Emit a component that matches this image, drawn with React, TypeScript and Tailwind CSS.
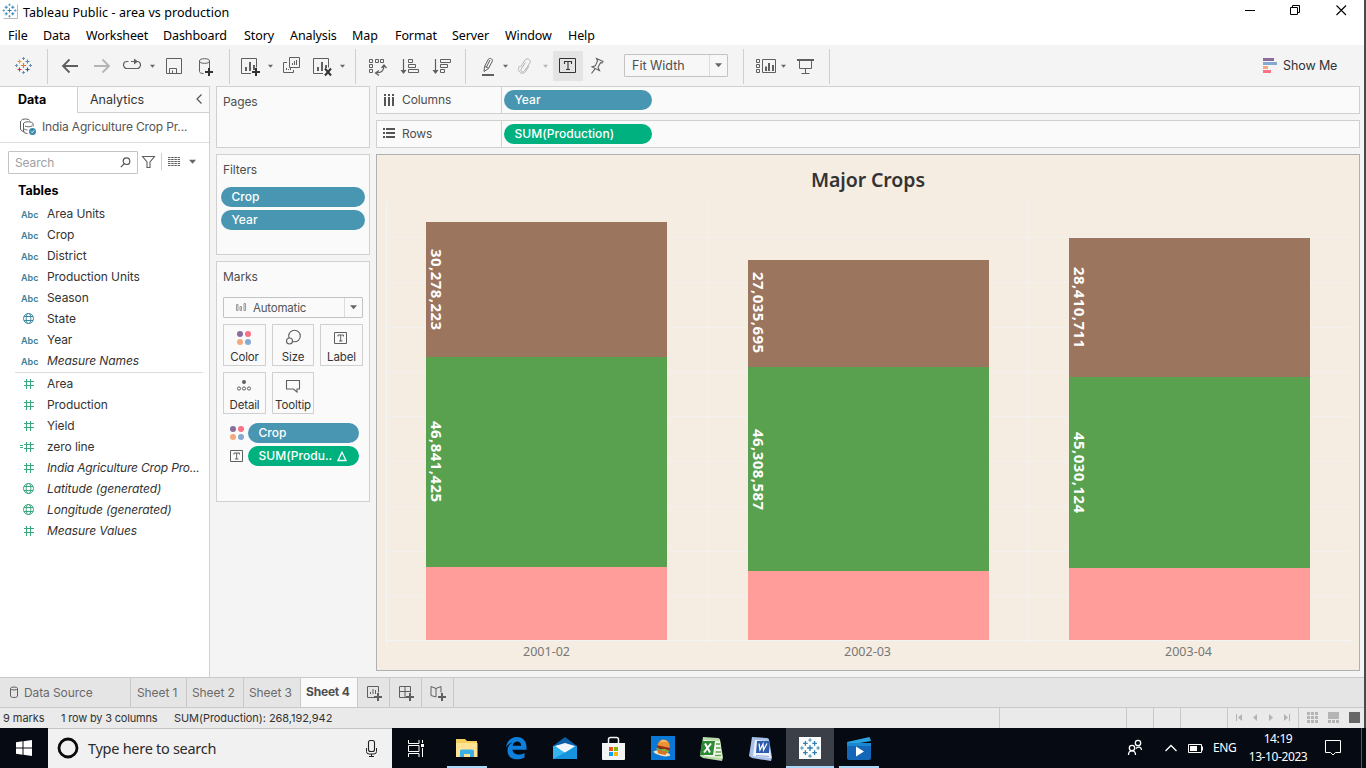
import React from "react";

type Box = { x: number; y: number; w: number; h: number; className?: string; children?: React.ReactNode };

/* An icon cell whose drawing uses window coordinates. */
function Cell({ x, y, w, h, className = "", children }: Box) {
  return (
    <svg className={`block shrink-0 ${className}`} width={w} height={h} viewBox={`${x} ${y} ${w} ${h}`} fill="none" stroke="#5f5f5f" strokeWidth="1">
      {children}
    </svg>
  );
}

function Plus({ x, y, r, c, s = 1 }: { x: number; y: number; r: number; c: string; s?: number }) {
  return <path d={`M${x - r} ${y}H${x + r}M${x} ${y - r}V${y + r}`} stroke={c} strokeWidth={s} />;
}

function LogoMark({ x, y, k = 1, colors }: { x: number; y: number; k?: number; colors: string[] }) {
  const [mid, tl, tr, bl, br, edge] = colors;
  return (
    <g transform={`translate(${x} ${y}) scale(${k})`}>
      <Plus x={0} y={0} r={2.5} c={mid} s={1.2} />
      <Plus x={-4} y={-4} r={2} c={tl} s={1.1} />
      <Plus x={4} y={-4} r={2} c={tr} s={1.1} />
      <Plus x={-4} y={4} r={2} c={bl} s={1.1} />
      <Plus x={4} y={4} r={2} c={br} s={1.1} />
      <Plus x={0} y={-7} r={1.5} c={edge} />
      <Plus x={0} y={7} r={1.5} c={edge} />
      <Plus x={-7} y={0} r={1.5} c={edge} />
      <Plus x={7} y={0} r={1.5} c={edge} />
    </g>
  );
}

const BLUE_LOGO = ["#2f7fb0", "#2f7fb0", "#2f7fb0", "#2f7fb0", "#2f7fb0", "#4b93bd"];
const COLOR_LOGO = ["#e8762d", "#e89a3c", "#5b8ba8", "#c4324a", "#3d4f86", "#6f8fae"];

function Caret({ x, y = 66, c = "#666", s = 2.5 }: { x: number; y?: number; c?: string; s?: number }) {
  return <path d={`M${x - s} ${y - s / 2}h${2 * s}l${-s} ${s + 0.4}z`} fill={c} stroke="none" />;
}

function TitleBar() {
  return (
    <div className="flex h-[25px] items-center">
      <Cell x={0} y={0} w={23} h={25}>
        <path d="M3.500 18.500h14v-14" stroke="#b8b8b8" />
        <LogoMark x={9.5} y={10.5} k={0.82} colors={BLUE_LOGO} />
      </Cell>
      <span className="pt-[2px] text-[12.5px] tracking-[0.06px] text-black">Tableau Public - area vs production</span>
      <Cell x={1230} y={0} w={134} h={25} className="ml-auto">
        <path d="M1245 10.5h10" stroke="#000" />
        <path d="M1290.5 7.5h7v7h-7zM1292.5 7v-1.500h7v7h-2" stroke="#000" />
        <path d="M1336.500 5.500l9.500 9.500M1346 5.500l-9.500 9.500" stroke="#000" strokeWidth="1.1" />
      </Cell>
    </div>
  );
}

const MENUS: [string, string][] = [
  ["File", "w-[35px]"], ["Data", "w-[43px]"], ["Worksheet", "w-[77px]"], ["Dashboard", "w-[81px]"],
  ["Story", "w-[46px]"], ["Analysis", "w-[62px]"], ["Map", "w-[43px]"], ["Format", "w-[57px]"],
  ["Server", "w-[53px]"], ["Window", "w-[63px]"], ["Help", "w-[40px]"],
];

function MenuBar() {
  return (
    <div className="flex h-[20px] items-center pl-2 pt-[2px] text-[12.5px] tracking-[-0.1px] text-black">
      {MENUS.map(([m, w]) => (
        <span key={m} className={`${w} whitespace-nowrap`}>{m}</span>
      ))}
    </div>
  );
}

function Toolbar() {
  return (
    <div className="flex h-[41px] items-center bg-[#f4f4f4]">
      <Cell x={0} y={45} w={553} h={41}>
        <LogoMark x={23.500} y={65.500} colors={COLOR_LOGO} />
        <path d="M47.500 49v35M229.500 49v35M355.500 49v35M465.500 49v35" stroke="#cfcfcf" />
        <path d="M62.500 66h15.500M69.500 59.500l-6.500 6.500 6.500 6.500" strokeWidth="1.8" />
        <path d="M94 66h15.500M102.500 59.500l6.500 6.500-6.500 6.500" stroke="#b4b4b4" strokeWidth="1.8" />
        <path d="M128.500 61.500h-1.500a3.500 3.500 0 0 0 0 7h10a3.500 3.500 0 0 0 0-7h-6" strokeWidth="1.2" />
        <path d="M134 58.500v6l4-3z" fill="#5f5f5f" stroke="none" />
        <Caret x={152.500} />
        <path d="M166.500 58.500h15v15h-15zM169.500 73v-4.500h7v4.500M172.500 70.500v2.500" />
        <path d="M199.500 61v10.500c0 1.200 1.500 2 4 2M209.500 61v7" />
        <ellipse cx="204.500" cy="61" rx="5" ry="2.300" />
        <Plus x={209} y={72} r={4} c="#333" s={2} />
        <path d="M251 73.500h-9.500v-15h15v9" />
        <path d="M246 67v4M250 62v9M254 65v5" strokeWidth="2" />
        <Plus x={256} y={72} r={4} c="#333" s={2} />
        <Caret x={270.500} />
        <path d="M289.500 57.500h10v10h-10zM287 62.500h-3.500v10h10V70" />
        <path d="M292.500 65v-2M294.500 65v-4M296.500 65v-5M286.500 70v-2M288.500 70v-1M290.500 70v-2" />
        <path d="M323 73.500h-9.500v-15h15v9" />
        <path d="M318 67v4M322 62v9M326 65v3" strokeWidth="2" />
        <path d="M325 68.500l6 7M331 68.500l-6 7" stroke="#333" strokeWidth="2" />
        <Caret x={342.500} />
        <path d="M369.500 59.500h3v3h-3zM375.500 59.500h3v3h-3zM380.500 59.500h3v3h-3zM369.500 64.500h3v3h-3zM369.500 69.500h3v3h-3z" />
        <path d="M384 65.500c0 5-3 7.500-8 7.500M381.500 68l2.500-3 2.500 3M379 70.500l-3.500 2.500 3.500 2.500" strokeWidth="1.200" />
        <path d="M403.500 59v13" strokeWidth="1.200" />
        <path d="M400.500 70h6l-3 4z" fill="#5f5f5f" stroke="none" />
        <path d="M408.500 59.500h4v3h-4zM408.500 64.500h7v3h-7zM408.500 69.500h10v3h-10z" />
        <path d="M435.500 59v13" strokeWidth="1.200" />
        <path d="M432.500 70h6l-3 4z" fill="#5f5f5f" stroke="none" />
        <path d="M440.500 59.500h10v3h-10zM440.500 64.500h7v3h-7zM440.500 69.500h4v3h-4z" />
        <path d="M484.500 66.500l4-7.500c1-1.500 4.500 0 4 1.800l-4 7.700-4.500 3zM485 66.500l4 2M490 60l-3.500 7" />
        <path d="M482 75h12" strokeWidth="2" />
        <Caret x={505.500} />
        <path d="M520.500 67l4.500-7c1.800-2.500 6.500-.5 5 2.800l-5.500 8.200c-1.500 2-4.500.5-3.500-1.700l4.500-6.800M519.500 66c-2 3.500-.5 6 1.500 7 2 .8 3.500 0 4.500-1.500l3.500-5.500" stroke="#b4b4b4" />
        <Caret x={545.500} c="#b4b4b4" />
      </Cell>
      <div className="flex h-[30px] w-[30px] items-center justify-center bg-[#e4e4e4]">
        <Cell x={553} y={51} w={30} h={30}>
          <path d="M559.500 58.500h16v14h-16z" stroke="#333" />
          <path d="M564.500 64v-2.500h7v2.500M568 61.500v8M566 69.500h4" stroke="#333" strokeWidth="1.1" />
        </Cell>
      </div>
      <Cell x={583} y={45} w={41} h={41}>
        <path d="M596.500 58.500l6.500 3-1 1.500-1.500-.300-2.500 4.500 1.500 3.500-7.500-3.800 3.300-1 2.200-5zM595 68.800l-3.500 4.700" strokeWidth="1.1" />
      </Cell>
      <div className="flex h-[23px] w-[104px] items-stretch rounded-[1px] border border-[#c3c3c3] bg-[#f7f7f7]">
        <span className="flex-1 pl-[7px] font-['Inter',sans-serif] text-[12.5px] leading-[21px] text-[#4e4e4e]">Fit Width</span>
        <div className="flex w-[18px] items-center justify-center border-l border-[#dcdcdc]">
          <Cell x={0} y={0} w={9} h={9}><Caret x={4.500} y={4} s={3.500} /></Cell>
        </div>
      </div>
      <Cell x={728} y={45} w={112} h={41}>
        <path d="M743.500 49v35M829.500 49v35" stroke="#cfcfcf" />
        <path d="M756.500 59.500h3v3h-3zM756.500 64.500h3v3h-3zM756.500 69.500h3v3h-3zM762.500 59.500h13v13h-13z" />
        <path d="M766 66.500v4.500M769 63v8M773 65v6" strokeWidth="2" />
        <Caret x={783.500} />
        <path d="M797 60h17" strokeWidth="2" />
        <path d="M799.500 60v8.500h12V60M805.500 68.500v4.500M801.500 73.500h8" />
      </Cell>
      <div className="ml-auto flex items-center pr-[27px]">
        <Cell x={1263} y={45} w={20} h={41}>
          <path d="M1263 59.500h11" stroke="#8a6d9b" strokeWidth="3" />
          <path d="M1263 63.500h14" stroke="#86a9d1" strokeWidth="3" />
          <path d="M1263 67.500h5" stroke="#f4a582" strokeWidth="3" />
          <path d="M1263 71.500h8" stroke="#fb7185" strokeWidth="3" />
        </Cell>
        <span className="w-[54px] whitespace-nowrap pt-[1px] font-['Inter',sans-serif] text-[12.5px] tracking-[-0.1px] text-[#333]">Show Me</span>
      </div>
    </div>
  );
}

type FieldKind = "abc" | "geo" | "num" | "calc" | "geonum";

function FieldIcon({ kind }: { kind: FieldKind }) {
  if (kind === "abc") return <span className="w-[26px] pt-[2px] text-[9px] font-semibold text-[#3f8099]">Abc</span>;
  const c = kind === "geo" ? "#3d8aa6" : "#3ba77f";
  if (kind === "geo" || kind === "geonum")
    return (
      <svg className="w-[26px]" width="26" height="13" viewBox="0 0 26 13" fill="none" stroke={c}>
        <circle cx="7.500" cy="6.500" r="5" />
        <ellipse cx="7.500" cy="6.500" rx="2.300" ry="5" />
        <path d="M3 4.500h9M3 8.500h9" />
      </svg>
    );
  return (
    <svg className="overflow-visible" width="26" height="13" viewBox="0 0 26 13" fill="none" stroke={c} strokeWidth="1.1">
      <path d="M5.500 2v10M9.500 2v10M3 4.500h10M3 8.500h10" />
      {kind === "calc" && <path d="M-1 5.500h3M-1 7.500h3" />}
    </svg>
  );
}

const DIMS: [FieldKind, string, boolean?][] = [
  ["abc", "Area Units"], ["abc", "Crop"], ["abc", "District"], ["abc", "Production Units"],
  ["abc", "Season"], ["geo", "State"], ["abc", "Year"], ["abc", "Measure Names", true],
];
const MEASURES: [FieldKind, string, boolean?][] = [
  ["num", "Area"], ["num", "Production"], ["num", "Yield"], ["calc", "zero line"],
  ["num", "India Agriculture Crop Pro...", true], ["geonum", "Latitude (generated)", true],
  ["geonum", "Longitude (generated)", true], ["num", "Measure Values", true],
];

function FieldRow({ kind, name, italic }: { kind: FieldKind; name: string; italic?: boolean }) {
  const spacing = !italic ? "tracking-[-0.08px]" : name.length > 24 ? "italic tracking-[-0.18px]" : "italic tracking-[-0.1px]";
  return (
    <div className="flex h-[21px] items-center pl-[21px]">
      <FieldIcon kind={kind} />
      <span className={`whitespace-nowrap pt-px ${spacing}`}>{name}</span>
    </div>
  );
}

function DataPane() {
  return (
    <div className="flex w-[210px] shrink-0 flex-col border-r border-[#d0d0d0] bg-white text-[12px] text-[#333]">
      <div className="flex h-[27px]">
        <div className="w-[77px] border-t border-[#d0d0d0] pl-[18px] text-[12.5px] font-bold leading-[25px] text-black">Data</div>
        <div className="flex flex-1 items-center border border-r-0 border-[#d0d0d0] bg-[#fafafa] pl-3 text-[12.5px]">
          <span className="pt-px">Analytics</span>
          <svg className="ml-auto mr-[6px]" width="8" height="12" viewBox="0 0 8 12" fill="none" stroke="#555" strokeWidth="1.2"><path d="M6.500 .5L2 5l4.500 4.500" /></svg>
        </div>
      </div>
      <div className="flex h-[30px] items-center border-b border-[#dedede] text-[#555]">
        <Cell x={0} y={113} w={42} h={29}>
          <path d="M21.500 120.500c0-2 8-2 8 0M20.500 121v8c0 1.500 2 2.500 4 2.500M23.500 123v8.500c0 1 2 2 4 2M23.500 123.500c1-2.500 9-2 9.500 0v3M25 126c2 1 5 1 7 0M23.500 128.500c1 1 3 1.500 4 1.500" />
          <circle cx="32.500" cy="131.500" r="3.500" fill="#3a87ad" stroke="none" />
          <path d="M31 131.500l1.200 1.200 2-2.300" stroke="#fff" />
        </Cell>
        <span className="whitespace-nowrap pb-[2px] tracking-[-0.15px]">India Agriculture Crop Pr...</span>
      </div>
      <div className="mt-[8px] flex h-[23px] items-center pl-2">
        <div className="flex h-[23px] w-[130px] items-center rounded-[1px] border border-[#c3c3c3] pl-[6px] pr-[6px] text-[#a0a0a0]">
          <span className="tracking-[-0.1px]">Search</span>
          <svg className="ml-auto" width="11" height="11" viewBox="0 0 11 11" fill="none" stroke="#555" strokeWidth="1.2"><circle cx="6.500" cy="4.200" r="3.300" /><path d="M4 7L.8 10.200" /></svg>
        </div>
        <Cell x={138} y={151} w={64} h={23}>
          <path d="M142.500 156.500h12l-4.500 5.500v5.500h-3v-5.500z" strokeWidth="1.1" />
          <path d="M161.500 153v17.500" stroke="#cfcfcf" />
          <path d="M168 157.500h12M168 159.500h12M168 161.500h12M168 163.500h12M168 165.500h12" strokeDasharray="2.500 .7" />
          <Caret x={192.500} y={161.500} s={3.500} />
        </Cell>
      </div>
      <div className="mt-[8px] h-[21px] pl-[18px] text-[12.5px] font-bold leading-[18px] text-black">Tables</div>
      {DIMS.map(([k, n, i]) => <FieldRow key={n} kind={k} name={n} italic={i} />)}
      <div className="ml-[15px] mr-[6px] mt-[1px] h-px shrink-0 bg-[#dcdcdc]" />
      {MEASURES.map(([k, n, i]) => <FieldRow key={n} kind={k} name={n} italic={i} />)}
    </div>
  );
}

function Pill({ label, className, delta }: { label: string; className: string; delta?: boolean }) {
  return (
    <div className={`flex h-[20px] items-center rounded-full pl-[10.5px] text-[12px] font-medium text-white ${className}`}>
      <span className="whitespace-nowrap tracking-[0.04px]">{label}</span>
      {delta && <svg className="ml-auto mr-[11px]" width="12" height="11" viewBox="0 0 12 11" fill="none" stroke="#fff" strokeWidth="1.300"><path d="M6 1.200L10 9.500H2z" /></svg>}
    </div>
  );
}

function Dots() {
  return (
    <svg width="16" height="16" viewBox="0 0 16 16">
      <circle cx="4" cy="4" r="3" fill="#8a6d9b" /><circle cx="12" cy="4" r="3" fill="#fb7185" />
      <circle cx="4" cy="12" r="3" fill="#f4a97c" /><circle cx="12" cy="12" r="3" fill="#86a9d1" />
    </svg>
  );
}

function TBox() {
  return (
    <svg width="16" height="16" viewBox="0 0 16 16" fill="none" stroke="#5f5f5f">
      <path d="M1.500 2.500h12v11h-12zM5 6.500v-1.500h5.500v1.500M7.700 5v6M6 11h3.500" />
    </svg>
  );
}

function MarkButton({ label, children }: { label: string; children: React.ReactNode }) {
  return (
    <div className="flex h-[42px] flex-col items-center border border-[#d0d0d0]">
      <div className="mr-[1px] mt-[4px] flex h-[17px] items-center">{children}</div>
      <span className="mt-[4px] text-[11.500px] leading-[14px] tracking-[-0.14px] text-[#333]">{label}</span>
    </div>
  );
}

function Cards() {
  return (
    <div className="ml-[6px] flex w-[154px] shrink-0 flex-col gap-[6px] text-[12px] text-[#4e4e4e]">
      <div className="h-[62px] border border-[#d0d0d0] bg-[#fafafa] pl-[6px] pt-[6px] leading-[18px] tracking-[-0.1px]">Pages</div>
      <div className="h-[101px] border border-[#d0d0d0] bg-[#fafafa] px-[4px] pt-[6px]">
        <div className="mb-[8px] pl-[2px] leading-[18px] tracking-[-0.1px]">Filters</div>
        <Pill label="Crop" className="mb-[3px] bg-[#4996b2]" />
        <Pill label="Year" className="bg-[#4996b2]" />
      </div>
      <div className="h-[241px] border border-[#d0d0d0] bg-[#fafafa] px-[6px] pt-[6px]">
        <div className="leading-[18px] tracking-[-0.1px]">Marks</div>
        <div className="mt-[11px] flex h-[21px] items-stretch rounded-[1px] border border-[#c3c3c3] text-[11.500px]">
          <Cell x={224} y={298} w={29} h={19}>
            <path d="M236.500 304.500h1.500v6h-1.500zM240 306.500h1.500v4h-1.500zM244 303.500h1.500v7h-1.500z" stroke="#999" />
          </Cell>
          <span className="flex-1 pt-px leading-[19px] tracking-[-0.2px] text-[#555]">Automatic</span>
          <div className="flex w-[18px] items-center justify-center border-l border-[#dcdcdc]">
            <Cell x={0} y={0} w={9} h={9}><Caret x={4.500} y={4} s={3.500} /></Cell>
          </div>
        </div>
        <div className="mt-[6px] grid grid-cols-[43px_42px_43px] gap-[6px]">
          <MarkButton label="Color"><Dots /></MarkButton>
          <MarkButton label="Size">
            <svg width="18" height="17" viewBox="0 0 18 17" fill="none" stroke="#5f5f5f" strokeWidth="1.1"><circle cx="10.500" cy="7" r="5.800" /><circle cx="5.500" cy="12" r="3" fill="#fafafa" /></svg>
          </MarkButton>
          <MarkButton label="Label"><TBox /></MarkButton>
          <MarkButton label="Detail">
            <svg width="16" height="14" viewBox="0 0 16 14" fill="none" stroke="#5f5f5f"><circle cx="8" cy="3" r="2" fill="#5f5f5f" stroke="none" /><circle cx="3" cy="9.500" r="1.600" /><circle cx="8" cy="9.500" r="1.600" /><circle cx="13" cy="9.500" r="1.600" /></svg>
          </MarkButton>
          <MarkButton label="Tooltip">
            <svg width="16" height="16" viewBox="0 0 16 16" fill="none" stroke="#5f5f5f" strokeWidth="1.1"><path d="M1.500 2.500h13v8.500h-2.500v3l-3.500-3h-7z" /></svg>
          </MarkButton>
        </div>
        <div className="mt-[9px] flex items-center pl-[6px]">
          <Dots /><Pill label="Crop" className="ml-[3px] w-[111px] bg-[#4996b2]" />
        </div>
        <div className="mt-[3px] flex items-center pl-[6px]">
          <TBox /><Pill label="SUM(Produ.." className="ml-[3px] w-[111px] bg-[#00b180]" delta />
        </div>
      </div>
    </div>
  );
}

function Shelf({ label, pill, color, rows }: { label: string; pill: string; color: string; rows?: boolean }) {
  return (
    <div className="flex h-[28px] items-center border border-[#d0d0d0] bg-[#fafafa] text-[12px] text-[#4e4e4e]">
      <svg className="ml-[6px] mr-[7px]" width="12" height="12" viewBox="0 0 12 12" fill="#555">
        {rows ? (
          <path d="M0 0h2v2H0zM3 0h9v2H3zM0 4h2v2H0zM3 4h9v2H3zM0 8h2v2H0zM3 8h9v2H3z" />
        ) : (
          <path d="M1 0h2v2H1zM1 3h2v9H1zM5 0h2v2H5zM5 3h2v9H5zM9 0h2v2H9zM9 3h2v9H9z" />
        )}
      </svg>
      <span className="w-[99px] tracking-[-0.1px]">{label}</span>
      <div className="h-full w-px bg-[#d0d0d0]" />
      <Pill label={pill} className={`ml-[2px] w-[148px] ${color}`} />
    </div>
  );
}

const GRID = [595, 551, 506, 461, 416, 372, 327, 282, 237];
const BARS: { x: number; tops: number[]; labels: [string, number][]; name: string; cx: number }[] = [
  { x: 426, tops: [222, 357, 567], labels: [["30,278,223", 289.5], ["46,841,425", 461.5]], name: "2001-02", cx: 546.5 },
  { x: 748, tops: [260, 367, 571], labels: [["27,035,695", 312.5], ["46,308,587", 469.5]], name: "2002-03", cx: 867.5 },
  { x: 1069, tops: [238, 377, 568], labels: [["28,410,711", 307.5], ["45,030,124", 472.5]], name: "2003-04", cx: 1188.5 },
];

function Chart() {
  return (
    <div className="h-[517px] border border-[#b0b0b0] bg-[#f6ede2]">
      <svg className="block font-['Noto_Sans',sans-serif]" width="982" height="515" viewBox="377 155 982 515">
        <text x="811" y="187" fontSize="19.500" fontWeight="600" fill="#333" textLength="114">Major Crops</text>
        <g stroke="#f2f1f0">
          {GRID.map((y) => <path key={y} d={`M387 ${y + 0.5}H1350`} />)}
          <path d="M707.500 201v443M1028.500 201v443" />
        </g>
        <path d="M386.500 201v443M1350.500 640v4" stroke="#f3f4f6" />
        {BARS.map((b) => (
          <g key={b.name}>
            <rect x={b.x} y={b.tops[0]} width="241" height={b.tops[1] - b.tops[0]} fill="#9c755f" />
            <rect x={b.x} y={b.tops[1]} width="241" height={b.tops[2] - b.tops[1]} fill="#59a14f" />
            <rect x={b.x} y={b.tops[2]} width="241" height={640 - b.tops[2]} fill="#ff9d9a" />
            {b.labels.map(([t, cy]) => (
              <text key={t} transform={`translate(${b.x + 4.8} ${cy}) rotate(90)`} x="-40.500" y="0" textLength="81" fontSize="15" fontWeight="700" fill="#fff">{t}</text>
            ))}
            <text x={b.cx - 23.500} y="656" textLength="47" fontSize="12.500" fill="#777">{b.name}</text>
          </g>
        ))}
        <path d="M386 640.500H1351" stroke="#f3f4f6" />
      </svg>
    </div>
  );
}

function SheetTabs() {
  return (
    <div className="flex h-[31px] border-y border-[#c9c9c9] bg-[#e5e5e5] text-[12px] leading-[29px] tracking-[-0.1px] text-[#6a6a6a]">
      <div className="flex w-[131px] items-center border-r border-[#c9c9c9] pl-[9px]">
        <svg width="15" height="14" viewBox="0 0 15 14" fill="none" stroke="#5f5f5f"><ellipse cx="5" cy="2.500" rx="3.500" ry="1.500" /><path d="M1.500 2.500v7.500c0 2 7 2 7 0V2.500" /></svg>
        <span>Data Source</span>
      </div>
      <div className="w-[56px] border-r border-[#c9c9c9] pl-[6px]">Sheet 1</div>
      <div className="w-[57px] border-r border-[#c9c9c9] pl-[5px]">Sheet 2</div>
      <div className="w-[57px] border-r border-[#c9c9c9] pl-[5px]">Sheet 3</div>
      <div className="w-[57px] border-r border-[#c9c9c9] bg-[#fafafa] pl-[5px] text-[12px] font-bold leading-[28px] tracking-[-0.2px] text-[#4e4e4e]">Sheet 4</div>
      <Cell x={358} y={678} w={96} h={29}>
        <path d="M389.500 678v29M421.500 678v29M453.500 678v29" stroke="#c9c9c9" />
        <path d="M374 697.500h-6.500v-11h11v6M370.500 694v-2M373 694v-5M375.500 694v-4" />
        <path d="M406 697.500h-6.500v-11h11v6M399.500 691.500h11M405 686.500v11" />
        <path d="M436 697l-5-1.500v-9l5 2 5-2v6M436 688.500v8.500" />
        <Plus x={378} y={697} r={4} c="#5f5f5f" s={2} />
        <Plus x={410} y={697} r={4} c="#5f5f5f" s={2} />
        <Plus x={442} y={697} r={4} c="#5f5f5f" s={2} />
      </Cell>
    </div>
  );
}

function StatusBar() {
  return (
    <div className="flex h-[20px] items-center bg-[#eaeaea] text-[11px] text-[#333]">
      <span className="w-[58px] pl-[3px] tracking-[-0.05px]">9 marks</span>
      <span className="w-[116px] whitespace-nowrap pl-[3px] tracking-[-0.18px]">1 row by 3 columns</span>
      <span className="tracking-[-0.06px]">SUM(Production): 268,192,942</span>
      <Cell x={990} y={708} w={374} h={20} className="ml-auto">
        <path d="M999.500 708v20M1126.500 708v20M1153.500 708v20M1180.500 708v20M1227.500 708v20M1298.500 708v20" stroke="#c9c9c9" />
        <g fill="#b4b4b4" stroke="none">
          <path d="M1236 714h1v7h-1zM1242 714v7l-4-3.500zM1257 714v7l-4-3.500zM1269 714v7l4-3.500zM1284 714v7l4-3.500zM1289 714h1v7h-1z" />
          <path d="M1307 712h3v3h-3zM1311 712h3v3h-3zM1315 712h3v3h-3zM1307 716h3v3h-3zM1311 716h3v3h-3zM1315 716h3v3h-3zM1307 720h3v3h-3zM1311 720h3v3h-3zM1315 720h3v3h-3z" />
          <path d="M1328 712h11v7h-11zM1328 720h3v3h-3zM1332 720h3v3h-3zM1336 720h3v3h-3z" />
          <path d="M1349 712h11v11h-11z" fill="#666" />
        </g>
      </Cell>
    </div>
  );
}

function TaskIcons() {
  return (
    <Cell x={392} y={728} w={500} h={40}>
      <path d="M408.500 740v3.500h10.500v-3.500M408.500 745.500h10.500v6h-10.500zM408.500 757v-3.500h10.500v3.500M422.500 740v3M422.500 748v9" stroke="#fff" />
      <rect x="421" y="744" width="3" height="3" fill="#fff" stroke="none" />
      <path d="M447 766h40v2h-40zM839 766h40v2h-40z" fill="#a9d9f7" stroke="none" />
      <g stroke="none">
        <path d="M456 739h9l2 2h10v16h-21z" fill="#f5cf5c" />
        <path d="M456 743h21.500v14h-21.500z" fill="#ffe394" />
        <path d="M460 757v-6q0-1.500 1.500-1.500h11q1.500 0 1.500 1.500v6h-4v-3h-6v3z" fill="#39b1e8" />
        <path d="M506 747.500c1-7 5.500-10.500 11-10.500 6 0 9.500 4.500 9.500 10v2.800h-14c.3 5 7 6 12 3.200v4.500c-8 4-17 1.500-17-7 0-3.500 2-6.500 5-8-3 .6-5 2.500-6.500 5zm6.700-1.800h8.500c0-5.500-7.500-5.500-8.500 0z" fill="#0f7fdc" />
        <path d="M553 746l12-9 12 9z" fill="#0a5ea8" />
        <path d="M553 746l12-1 12 1v13h-24z" fill="#27a7ea" />
        <path d="M555 746l10-3 10 3-10 7z" fill="#eef6fb" />
        <path d="M553 746l12 7 12-7v13h-24z" fill="#35b4f0" />
        <path d="M553 759l24-13v13z" fill="#1593dc" />
        <path d="M602 743h23v16q0 1-1 1h-21q-1 0-1-1z" fill="#f4f4f4" />
        <path d="M608.500 743v-3.500q0-2 2-2h6q2 0 2 2V743" fill="none" stroke="#f4f4f4" strokeWidth="1.500" />
        <path d="M609 747h4v4h-4z" fill="#f25022" /><path d="M614 747h4v4h-4z" fill="#7fba00" />
        <path d="M609 752h4v4h-4z" fill="#00a4ef" /><path d="M614 752h4v4h-4z" fill="#ffb900" />
        <rect x="651" y="736" width="24" height="24" fill="#0a78d7" />
        <g transform="rotate(12 663 748)">
          <ellipse cx="663" cy="753.500" rx="8.500" ry="2.500" fill="#efe0c6" />
          <path d="M657 747c0-10 12-10 12.500 0z" fill="#ee9434" />
          <path d="M659 743c1-3 5-3.500 7-1.500-2-.5-5 0-7 1.500z" fill="#fbd08a" />
          <path d="M656.500 746.500h13.500l-.5 3h-12.500z" fill="#9a2a14" />
          <path d="M656.500 748.500l4 1.500 4-1.500 5 1v1.500h-12.500z" fill="#7fb33b" />
          <path d="M657.500 750.800h11l-2 3.500h-7z" fill="#d9731f" />
        </g>
        <path d="M703 737l15 1q1.500 0 2 1.500l3 18-1 3.500-19-3-3-2z" fill="#b9dba8" />
        <path d="M704 740l16 1 2 17-18-2z" fill="#f1f7ed" />
        <path d="M702 741h13l-2 14h-13z" fill="#2f8a36" />
        <path d="M705 743.500l5 9M711 743.500l-7 9" stroke="#fff" strokeWidth="2" />
        <path d="M716 744h4M716 748h4.500M715.500 752h5.500M715 755.500h6" stroke="#5fa84e" strokeWidth="1.500" />
        <path d="M752 737l15 1q1.500 0 2 1.500l3 18-1 3.500-19-3-3-2z" fill="#a9c1e8" />
        <path d="M755 740l14 1 2 17-18-2z" fill="#f0f4fb" />
        <path d="M757 741h13l-1 12h-13z" fill="#2c5cab" />
        <path d="M759 743.500l1 6.500 3-6 .5 6 3.500-6.500" fill="none" stroke="#fff" strokeWidth="1.300" />
        <path d="M756 755.500l13 1" stroke="#8aa8dc" />
        <rect x="786" y="728" width="48" height="40" fill="#3b3f47" />
        <rect x="786" y="766" width="48" height="2" fill="#a9d9f7" />
        <rect x="799" y="737" width="22" height="22" fill="#fafcfd" />
      </g>
      <LogoMark x={810} y={748} k={1.150} colors={BLUE_LOGO} />
      <g stroke="none">
        <path d="M847 742l22.500-5 1.500 4-23 4z" fill="#2aa5e0" />
        <path d="M847 743h24v15q0 2-2 2h-20q-2 0-2-2z" fill="#1467b8" />
        <path d="M847 743h24v3h-24z" fill="#1b87cf" />
        <path d="M856 746.500v10l8-5z" fill="#fff" />
      </g>
    </Cell>
  );
}

function Taskbar() {
  return (
    <div className="flex h-[40px] items-stretch bg-[#060b13] text-white">
      <Cell x={0} y={728} w={48} h={40}>
        <path d="M16 742.300l6.500-1v6.200H16zM23.500 741.200l8.500-1.200v7.500h-8.500zM16 748.500h6.500v6.300l-6.500-1zM23.500 748.500h8.500v7.500l-8.500-1.200z" fill="#fff" stroke="none" />
      </Cell>
      <div className="flex w-[344px] items-center border-t border-[#c4c4c4] bg-[#f1f1f1]">
        <Cell x={48} y={729} w={40} h={39}>
          <circle cx="68" cy="748" r="9" stroke="#0a0a0a" strokeWidth="2.800" />
        </Cell>
        <span className="text-[14.500px] tracking-[-0.28px] text-[#2b2b2b]">Type here to search</span>
        <Cell x={360} y={729} w={32} h={39} className="ml-auto">
          <rect x="368.500" y="740.500" width="6" height="11" rx="2" stroke="#222" strokeWidth="1.100" />
          <path d="M366.500 748v3.500q0 2.500 2.500 2.500h5q2.500 0 2.500-2.500V748M371.500 754v3M369 756.500h5" stroke="#222" />
        </Cell>
      </div>
      <TaskIcons />
      <div className="ml-auto flex items-center">
        <Cell x={1120} y={728} w={93} h={40}>
          <g stroke="#fff" strokeWidth="1.300">
            <circle cx="1132" cy="748" r="2.700" /><path d="M1128.500 755c0-5.500 7-5.500 7 0" />
            <circle cx="1138" cy="743" r="2.700" /><path d="M1136 748.500c2-2.500 5.500-1.500 5.500 1.500" />
            <path d="M1165.500 751l5.500-5.500 5.500 5.500" />
          </g>
          <path d="M1188.500 744.500h13v8h-13zM1202.500 746.500v4" stroke="#fff" />
          <rect x="1190" y="746" width="7" height="5" fill="#fff" stroke="none" />
        </Cell>
        <span className="w-[36px] text-[12px] tracking-[-0.4px]">ENG</span>
        <div className="flex w-[58px] flex-col items-center whitespace-nowrap text-[12px] leading-[18px] tracking-[-0.4px]">
          <span>14:19</span>
          <span>13-10-2023</span>
        </div>
        <Cell x={1307} y={728} w={59} h={40}>
          <path d="M1325.500 740.500h15v12h-5l-2.500 2.500-2.500-2.500h-5z" stroke="#fff" />
          <path d="M1361.500 728v40" stroke="#555a61" />
        </Cell>
      </div>
    </div>
  );
}

export default function App() {
  return (
    <div className="flex h-[768px] w-[1366px] flex-col overflow-hidden bg-white font-['Noto_Sans',sans-serif]">
      <div className="flex h-[728px] border-r-2 border-[#4a4a4a]">
        <div className="flex w-[1364px] flex-col">
          <TitleBar />
          <MenuBar />
          <Toolbar />
          <div className="flex h-[591px] bg-[#f4f4f4] font-['Inter',sans-serif]">
            <DataPane />
            <Cards />
            <div className="ml-[6px] flex w-[984px] flex-col gap-[6px]">
              <Shelf label="Columns" pill="Year" color="bg-[#4996b2]" />
              <Shelf label="Rows" pill="SUM(Production)" color="bg-[#00b180]" rows />
              <Chart />
            </div>
          </div>
          <div className="font-['Inter',sans-serif]">
            <SheetTabs />
            <StatusBar />
          </div>
        </div>
      </div>
      <Taskbar />
    </div>
  );
}
